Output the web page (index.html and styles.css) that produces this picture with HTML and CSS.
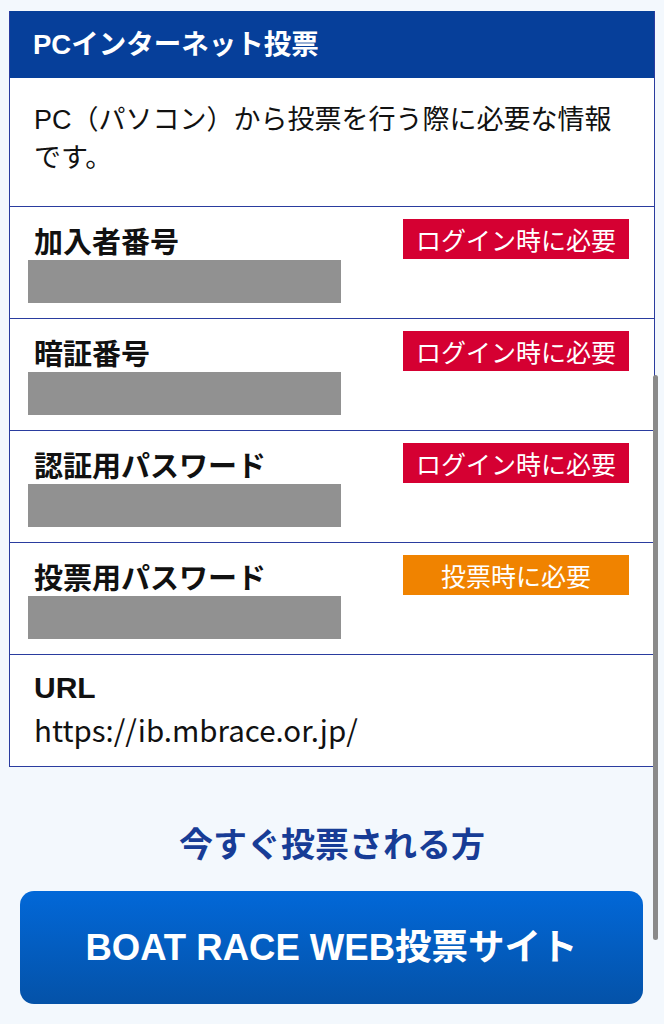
FILE: index.html
```html
<!DOCTYPE html>
<html lang="ja">
<head>
    <meta charset="UTF-8">
    <meta name="viewport" content="width=device-width, initial-scale=1.0">
    <title>PCインターネット投票</title>
    <link rel="stylesheet" href="styles.css">
</head>
<body>
    <div class="page">
        <div class="info-card">
            <h2 class="info-title">PCインターネット投票</h2>
            <p class="info-lead">PC（パソコン）から投票を行う際に必要な情報です。</p>

            <div class="info-row">
                <div class="row-head">
                    <h3>加入者番号</h3>
                    <span class="need-badge need-login">ログイン時に必要</span>
                </div>
                <div class="masked"></div>
            </div>

            <div class="info-row">
                <div class="row-head">
                    <h3>暗証番号</h3>
                    <span class="need-badge need-login">ログイン時に必要</span>
                </div>
                <div class="masked"></div>
            </div>

            <div class="info-row">
                <div class="row-head">
                    <h3>認証用パスワード</h3>
                    <span class="need-badge need-login">ログイン時に必要</span>
                </div>
                <div class="masked"></div>
            </div>

            <div class="info-row">
                <div class="row-head">
                    <h3>投票用パスワード</h3>
                    <span class="need-badge need-vote">投票時に必要</span>
                </div>
                <div class="masked"></div>
            </div>

            <div class="info-row">
                <div class="row-head">
                    <h3 class="latin">URL</h3>
                </div>
                <p class="url-text">https://ib.mbrace.or.jp/</p>
            </div>
        </div>

        <p class="now-title">今すぐ投票される方</p>
        <a href="#" class="web-button">BOAT RACE WEB投票サイト</a>

        <div class="scroll-thumb"></div>
    </div>
</body>
</html>
```

FILE: styles.css
```css
* {
    margin: 0;
    padding: 0;
    box-sizing: border-box;
}

body {
    font-family: "Noto Sans CJK JP", "Noto Sans", sans-serif;
    color: #111;
    background: #f3f8fd;
}

.page {
    position: relative;
    padding: 11px 9px 0 9px;
    min-height: 1024px;
}

.info-card {
    background: #fff;
    border: 1px solid #2a3c9f;
    border-top: none;
}

.info-title {
    background: #063f9a;
    color: #fff;
    font-family: "Liberation Sans", "Noto Sans CJK JP", sans-serif;
    font-size: 27.5px;
    font-weight: bold;
    line-height: 67px;
    height: 67px;
    padding-left: 23px;
}

.info-lead {
    font-family: "Liberation Sans", "Noto Sans CJK JP", sans-serif;
    font-size: 27px;
    line-height: 38px;
    padding: 23px 22px 29px 24px;
    border-bottom: 1px solid #2a3c9f;
}

.info-row {
    padding: 12px 25px 15px 24px;
    border-bottom: 1px solid #2a3c9f;
}

.info-row:last-child {
    border-bottom: none;
}

.row-head {
    display: flex;
    justify-content: space-between;
    align-items: flex-start;
    height: 41px;
}

.row-head h3 {
    font-size: 29px;
    font-weight: bold;
    line-height: 42px;
}

.row-head h3.latin {
    font-family: "Liberation Sans", sans-serif;
    font-size: 30px;
}

.need-badge {
    display: block;
    width: 226px;
    height: 40px;
    line-height: 40px;
    text-align: center;
    color: #fff;
    font-size: 25px;
}

.need-login {
    background: #d50032;
}

.need-vote {
    background: #f08300;
}

.masked {
    width: 313px;
    height: 43px;
    margin-left: -6px;
    background: #919191;
}

.url-text {
    font-size: 29.5px;
    line-height: 43px;
}

.now-title {
    text-align: center;
    color: #173c96;
    font-size: 34px;
    font-weight: bold;
    line-height: 44px;
    margin-top: 54px;
}

.web-button {
    display: block;
    margin: 26px 12px 0 11px;
    height: 113px;
    line-height: 113px;
    border-radius: 14px;
    background: linear-gradient(180deg, #0268d8 0%, #0452a8 100%);
    color: #fff;
    text-align: center;
    text-decoration: none;
    font-family: "Liberation Sans", "Noto Sans CJK JP", sans-serif;
    font-size: 36.5px;
    font-weight: bold;
}

.scroll-thumb {
    position: absolute;
    top: 375px;
    right: 6px;
    width: 5px;
    height: 565px;
    border-radius: 3px;
    background: #8a8a8a;
}
```
